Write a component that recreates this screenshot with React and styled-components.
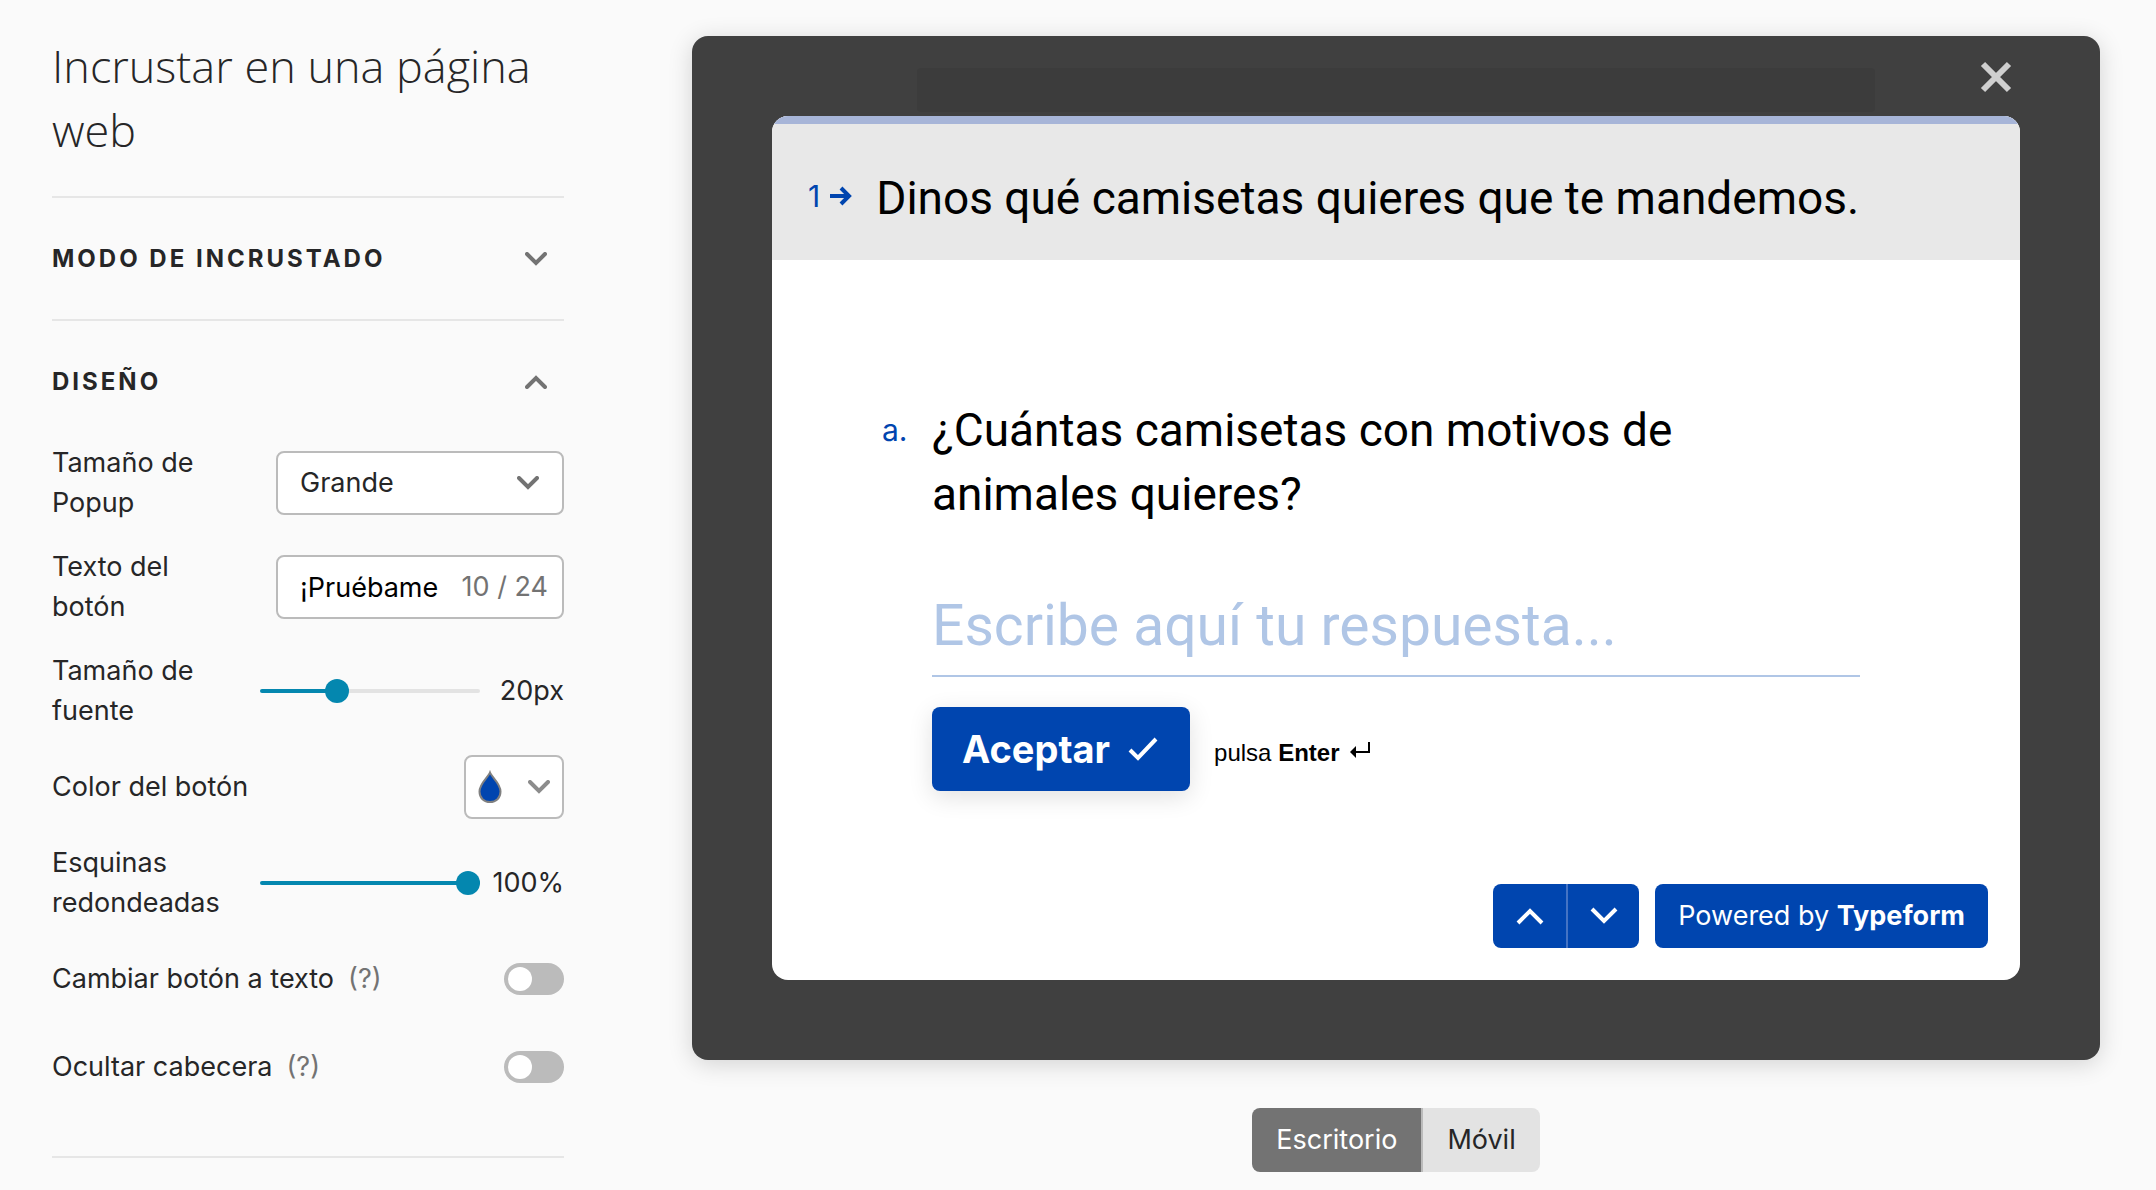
import React, { useState } from "react";
import styled, { createGlobalStyle } from "styled-components";

const App = () => {
  const [popupSize, setPopupSize] = useState("Grande");
  const [buttonText, setButtonText] = useState("¡Pruébame");
  const [fontSize, setFontSize] = useState(20);
  const [corners, setCorners] = useState(100);
  const [device, setDevice] = useState("desktop");

  return (
    <>
      <GlobalStyle />
      <StyledPage>
        <StyledSidebar>
          <StyledTitle>Incrustar en una página web</StyledTitle>

          <StyledSection>
            <SectionHeader title="Modo de incrustado" />
          </StyledSection>

          <StyledSection $open>
            <SectionHeader title="Diseño" open />
            <StyledFields>
              <StyledField>
                <label htmlFor="popup-size">Tamaño de Popup</label>
                <StyledBox>
                  <StyledSelect
                    id="popup-size"
                    value={popupSize}
                    onChange={(e) => setPopupSize(e.target.value)}
                  >
                    <option>Grande</option>
                    <option>Mediano</option>
                    <option>Pequeño</option>
                  </StyledSelect>
                  <Chevron />
                </StyledBox>
              </StyledField>

              <StyledField>
                <label htmlFor="button-text">Texto del botón</label>
                <StyledBox>
                  <StyledInput
                    id="button-text"
                    type="text"
                    maxLength={24}
                    value={buttonText}
                    onChange={(e) => setButtonText(e.target.value)}
                  />
                  <StyledCounter>10 / 24</StyledCounter>
                </StyledBox>
              </StyledField>

              <Slider
                id="font-size"
                label="Tamaño de fuente"
                min={10}
                max={40}
                value={fontSize}
                unit="px"
                onChange={setFontSize}
              />

              <StyledField>
                <span id="color-label">Color del botón</span>
                <StyledColorButton type="button" aria-labelledby="color-label">
                  <svg width="24" height="34" viewBox="0 0 24 34">
                    <path
                      d="M12 2.5C10 7.500 1.500 13.500 1.500 21.500C1.500 28 6 32 12 32S22.500 28 22.500 21.500C22.500 13.500 14 7.500 12 2.500Z"
                      fill="#0045af"
                      stroke="#808080"
                      strokeWidth="2"
                    />
                  </svg>
                  <Chevron color="#8c8c8c" />
                </StyledColorButton>
              </StyledField>

              <Slider
                id="corners"
                label="Esquinas redondeadas"
                min={0}
                max={100}
                value={corners}
                unit="%"
                onChange={setCorners}
              />

              <Toggle id="as-text" label="Cambiar botón a texto" />
              <Toggle id="hide-header" label="Ocultar cabecera" />
            </StyledFields>
          </StyledSection>
        </StyledSidebar>

        <StyledMain>
          <StyledPreview>
            <StyledGhost />
            <StyledClose type="button" aria-label="Cerrar">
              <svg width="32" height="32" viewBox="0 0 32 32">
                <path
                  d="M3 3L29 29M29 3L3 29"
                  stroke="#cfcfcf"
                  strokeWidth="6"
                />
              </svg>
            </StyledClose>

            <StyledForm onSubmit={(e) => e.preventDefault()}>
              <StyledFormHeader>
                <StyledNumber>
                  1
                  <svg width="22" height="20" viewBox="0 0 22 20">
                    <path
                      d="M0 10H19M11 2L19 10L11 18"
                      fill="none"
                      stroke="#0045af"
                      strokeWidth="4"
                    />
                  </svg>
                </StyledNumber>
                <h2>Dinos qué camisetas quieres que te mandemos.</h2>
              </StyledFormHeader>

              <StyledQuestion>
                <StyledLetter>a.</StyledLetter>
                <div>
                  <label htmlFor="answer">
                    ¿Cuántas camisetas con motivos de animales quieres?
                  </label>
                  <StyledAnswer
                    id="answer"
                    type="text"
                    placeholder="Escribe aquí tu respuesta..."
                  />
                  <StyledSubmit>
                    <StyledAccept type="submit">
                      Aceptar
                      <svg width="30" height="26" viewBox="0 0 30 26">
                        <path
                          d="M2 14L10 22L28 3"
                          fill="none"
                          stroke="#fff"
                          strokeWidth="4"
                        />
                      </svg>
                    </StyledAccept>
                    <StyledHint>
                      pulsa <strong>Enter</strong>
                      <svg width="21" height="18" viewBox="0 0 21 18">
                        <path
                          d="M19 0V10H4"
                          fill="none"
                          stroke="#000"
                          strokeWidth="2"
                        />
                        <path d="M0 10L6 4V16Z" />
                      </svg>
                    </StyledHint>
                  </StyledSubmit>
                </div>
              </StyledQuestion>

              <StyledFooter>
                <StyledNav>
                  <button type="button" aria-label="Anterior">
                    <svg width="28" height="18" viewBox="0 0 28 18">
                      <path d="M2 16L14 4L26 16" />
                    </svg>
                  </button>
                  <button type="button" aria-label="Siguiente">
                    <svg width="28" height="18" viewBox="0 0 28 18">
                      <path d="M2 2L14 14L26 2" />
                    </svg>
                  </button>
                </StyledNav>
                <StyledPowered href="#typeform">
                  Powered by <strong>Typeform</strong>
                </StyledPowered>
              </StyledFooter>
            </StyledForm>
          </StyledPreview>

          <StyledDevices>
            <StyledDevice
              type="button"
              $active={device === "desktop"}
              onClick={() => setDevice("desktop")}
            >
              Escritorio
            </StyledDevice>
            <StyledDevice
              type="button"
              $active={device === "mobile"}
              onClick={() => setDevice("mobile")}
            >
              Móvil
            </StyledDevice>
          </StyledDevices>
        </StyledMain>
      </StyledPage>
    </>
  );
};

const Chevron = ({ up, color = "#737373" }) => (
  <StyledChevron width="22" height="14" viewBox="0 0 22 14">
    <path
      d={up ? "M2 12L11 3L20 12" : "M2 2L11 11L20 2"}
      fill="none"
      stroke={color}
      strokeWidth="4"
      strokeLinecap="round"
    />
  </StyledChevron>
);

const SectionHeader = ({ title, open }) => (
  <StyledSectionHeader type="button" aria-expanded={!!open} $open={open}>
    {title}
    <Chevron up={open} />
  </StyledSectionHeader>
);

const Slider = ({ id, label, min, max, value, unit, onChange }) => {
  const ratio = (value - min) / (max - min);

  return (
    <StyledField>
      <label htmlFor={id}>{label}</label>
      <StyledSliderGroup>
        <StyledRange
          id={id}
          type="range"
          min={min}
          max={max}
          value={value}
          onChange={(e) => onChange(Number(e.target.value))}
          style={{ "--fill": `${ratio * 100}%` }}
        />
        <output htmlFor={id}>
          {value}
          {unit}
        </output>
      </StyledSliderGroup>
    </StyledField>
  );
};

const Toggle = ({ id, label }) => (
  <StyledField $tall>
    <StyledToggleLabel htmlFor={id}>
      {label}
      <span>(?)</span>
    </StyledToggleLabel>
    <StyledSwitch id={id} type="checkbox" />
  </StyledField>
);

const GlobalStyle = createGlobalStyle`
  * {
    margin: 0;
    padding: 0;
    box-sizing: border-box;
  }
  body {
    background: #fafafa;
    color: #262627;
    font-family: Inter, "Liberation Sans", sans-serif;
    font-size: 27px;
    line-height: 40px;
  }
  button, input, select {
    font: inherit;
    color: inherit;
    border: none;
    background: none;
  }
  button {
    cursor: pointer;
  }
`;

const StyledPage = styled.div`
  display: flex;
  gap: 128px;
  padding: 34px 56px 18px 52px;
`;

const StyledSidebar = styled.aside`
  flex: 0 0 512px;
  min-width: 0;
`;

const StyledTitle = styled.h1`
  font-family: "Open Sans", sans-serif;
  font-size: 45px;
  font-weight: 300;
  line-height: 64px;
  padding-bottom: 34px;
`;

const StyledSection = styled.section`
  border-top: 2px solid #e6e6e6;
  padding-bottom: ${(props) => (props.$open ? "57px" : "0")};
  border-bottom: ${(props) => (props.$open ? "2px solid #e6e6e6" : "none")};
`;

const StyledSectionHeader = styled.button`
  display: flex;
  justify-content: space-between;
  align-items: center;
  width: 100%;
  height: ${(props) => (props.$open ? "122px" : "121px")};
  padding-right: 17px;
  font-size: 24px;
  font-weight: 700;
  letter-spacing: 3px;
  text-transform: uppercase;
`;

const StyledChevron = styled.svg`
  flex-shrink: 0;
`;

const StyledFields = styled.div`
  display: flex;
  flex-direction: column;
  gap: 24px;
`;

const StyledField = styled.div`
  display: flex;
  justify-content: space-between;
  align-items: center;
  gap: 32px;
  min-height: ${(props) => (props.$tall ? "64px" : "0")};
`;

const StyledBox = styled.div`
  display: flex;
  align-items: center;
  flex: 0 0 288px;
  min-width: 0;
  height: 64px;
  position: relative;
  background: #fff;
  border: 2px solid #bbb;
  border-radius: 8px;
  ${StyledChevron} {
    position: absolute;
    right: 23px;
    pointer-events: none;
  }
`;

const StyledSelect = styled.select`
  appearance: none;
  width: 100%;
  height: 100%;
  padding: 0 22px;
`;

const StyledInput = styled.input`
  flex: 1;
  width: 0;
  min-width: 0;
  height: 100%;
  padding-left: 22px;
  color: #000;
`;

const StyledCounter = styled.span`
  padding: 0 14px 0 16px;
  color: #737373;
  white-space: nowrap;
`;

const StyledSliderGroup = styled.div`
  display: flex;
  align-items: center;
  flex: 0 0 304px;
  output {
    flex: 1;
    text-align: right;
  }
`;

const StyledRange = styled.input`
  appearance: none;
  width: 220px;
  height: 24px;
  &::-webkit-slider-runnable-track {
    height: 4px;
    border-radius: 2px;
    background: linear-gradient(
      to right,
      #0487af var(--fill),
      #e3e3e3 var(--fill)
    );
  }
  &::-webkit-slider-thumb {
    appearance: none;
    width: 24px;
    height: 24px;
    margin-top: -10px;
    border-radius: 50%;
    background: #0487af;
  }
`;

const StyledColorButton = styled.button`
  display: flex;
  justify-content: space-between;
  align-items: center;
  width: 100px;
  height: 64px;
  padding: 0 12px;
  background: #fff;
  border: 2px solid #bbb;
  border-radius: 8px;
`;

const StyledToggleLabel = styled.label`
  span {
    margin-left: 14px;
    color: #737373;
  }
`;

const StyledSwitch = styled.input`
  appearance: none;
  width: 60px;
  height: 32px;
  padding: 4px;
  border-radius: 16px;
  background: #bbb;
  &::before {
    content: "";
    display: block;
    width: 24px;
    height: 24px;
    border-radius: 50%;
    background: #fff;
  }
  &:checked {
    background: #0487af;
  }
  &:checked::before {
    margin-left: 28px;
  }
`;

const StyledMain = styled.main`
  flex: 1;
  min-width: 0;
  display: flex;
  flex-direction: column;
  align-items: center;
  gap: 48px;
  padding-top: 2px;
`;

const StyledPreview = styled.div`
  position: relative;
  width: 100%;
  padding: 80px;
  background: #404040;
  border-radius: 16px;
  box-shadow: 0 4px 24px rgba(0, 0, 0, 0.16);
`;

const StyledGhost = styled.div`
  position: absolute;
  top: 32px;
  left: 16%;
  right: 16%;
  height: 44px;
  background: #3c3c3c;
  border-radius: 4px;
`;

const StyledClose = styled.button`
  position: absolute;
  top: 25px;
  right: 88px;
  line-height: 0;
`;

const StyledForm = styled.form`
  position: relative;
  display: flex;
  flex-direction: column;
  background: #fff;
  color: #000;
  border-radius: 16px;
  overflow: hidden;
`;

const StyledFormHeader = styled.header`
  display: flex;
  gap: 24px;
  padding: 42px 36px 30px;
  background: #e8e8e8;
  border-top: 8px solid #a7b5d8;
  h2 {
    font-family: Roboto, sans-serif;
    font-size: 46px;
    font-weight: 400;
    line-height: 64px;
  }
`;

const StyledNumber = styled.span`
  display: flex;
  align-items: center;
  gap: 10px;
  height: 60px;
  font-size: 30px;
  color: #0045af;
`;

const StyledQuestion = styled.div`
  display: flex;
  padding: 138px 160px 93px 110px;
  div {
    flex: 1;
  }
  label {
    display: block;
    font-family: Roboto, sans-serif;
    font-size: 46px;
    line-height: 64px;
  }
`;

const StyledLetter = styled.span`
  flex: 0 0 50px;
  font-size: 30px;
  line-height: 64px;
  color: #0045af;
`;

const StyledAnswer = styled.input`
  && {
    font-family: Roboto, sans-serif;
    font-size: 57px;
    border-bottom: 2px solid #b0c6e6;
  }
  width: 100%;
  height: 103px;
  margin-top: 48px;
  padding-top: 2px;
  &::placeholder {
    color: #b0c6e6;
  }
`;

const StyledSubmit = styled.div`
  display: flex;
  align-items: center;
  gap: 24px;
  margin-top: 30px;
`;

const StyledAccept = styled.button`
  display: flex;
  align-items: center;
  gap: 16px;
  height: 84px;
  padding: 0 30px;
  font-size: 38px;
  font-weight: 700;
  color: #fff;
  background: #0045af;
  border-radius: 8px;
  box-shadow: 0 6px 24px rgba(0, 0, 0, 0.12);
  svg {
    margin: 0 2px;
  }
`;

const StyledHint = styled.p`
  padding-top: 8px;
  font-family: "Liberation Sans", Arial, sans-serif;
  font-size: 24px;
  svg {
    margin-left: 10px;
    vertical-align: 1px;
  }
`;

const StyledFooter = styled.footer`
  display: flex;
  justify-content: flex-end;
  gap: 16px;
  padding: 0 32px 32px;
`;

const StyledNav = styled.nav`
  display: flex;
  background: #0045af;
  border-radius: 8px;
  button {
    display: flex;
    align-items: center;
    justify-content: center;
    width: 73px;
    height: 64px;
  }
  button + button {
    border-left: 2px solid #4473c4;
  }
  path {
    fill: none;
    stroke: #fff;
    stroke-width: 4;
  }
`;

const StyledPowered = styled.a`
  padding: 0 23px;
  line-height: 64px;
  color: #fff;
  text-decoration: none;
  background: #0045af;
  border-radius: 8px;
`;

const StyledDevices = styled.div`
  display: flex;
  border-radius: 8px;
  overflow: hidden;
`;

const StyledDevice = styled.button`
  height: 64px;
  padding: 0 24px;
  color: ${(props) => (props.$active ? "#fff" : "#262627")};
  background: ${(props) => (props.$active ? "#737373" : "#e3e3e3")};
  & + & {
    border-left: 2px solid #bbb;
  }
`;

export default App;
